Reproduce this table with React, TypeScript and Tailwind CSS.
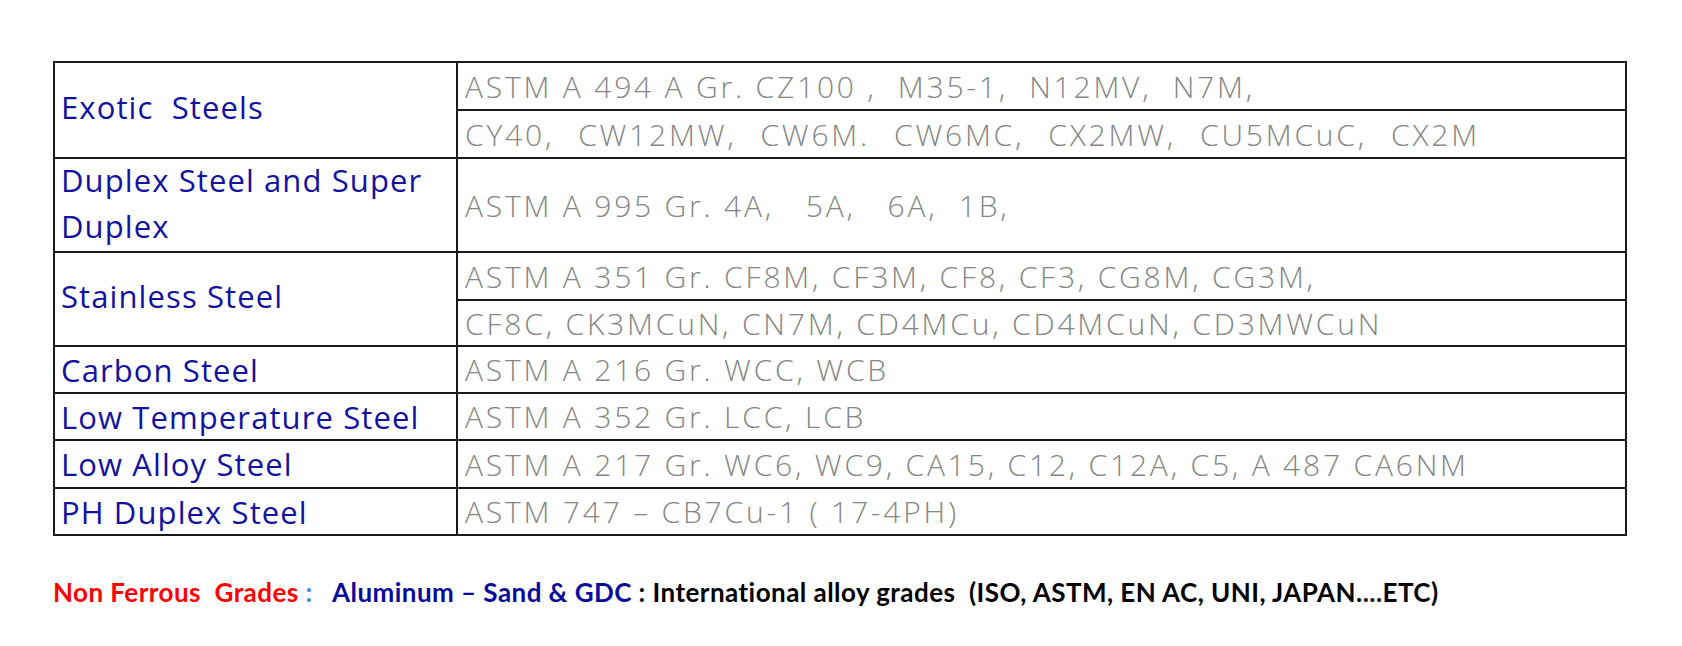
import React from "react";

const labelCls =
  "flex items-center w-[403px] shrink-0 border-r-2 border-[#1a1a1a] pl-[6px] text-[#1212a0] text-[31px] leading-[46px] tracking-[1.1px]";
const gradeCls =
  "flex items-center pl-[7px] text-[#858585] text-[30px] font-light tracking-[2.8px] whitespace-pre";

const labelFont = { fontFamily: '"Open Sans", "Noto Sans", sans-serif' } as const;

function Grade({ text, h, top, extra }: { text: string; h: string; top?: boolean; extra?: string }) {
  return (
    <div
      className={`${gradeCls} ${h} ${top ? "border-t-2 border-[#1a1a1a]" : ""} ${extra ?? ""}`}
      style={labelFont}
    >
      {text}
    </div>
  );
}

export default function App() {
  return (
    <div className="w-[1682px] h-[646px] bg-white overflow-hidden">
      <div className="pt-[61px] pl-[53px]">
        <div className="w-[1574px] border-2 border-[#1a1a1a] flex flex-col">
          {/* Exotic */}
          <div className="flex h-[94px]">
            <div className={labelCls} style={labelFont}>
              <span className="whitespace-pre -mt-[6px]">Exotic  Steels</span>
            </div>
            <div className="flex-1 flex flex-col">
              <Grade h="h-[46px]" text="ASTM A 494 A Gr. CZ100 ,  M35-1,  N12MV,  N7M," />
              <Grade
                top
                h="h-[48px]"
                extra="[word-spacing:1.4px]"
                text="CY40,  CW12MW,  CW6M.  CW6MC,  CX2MW,  CU5MCuC,  CX2M"
              />
            </div>
          </div>
          {/* Duplex */}
          <div className="flex h-[94px] border-t-2 border-[#1a1a1a]">
            <div className={labelCls} style={labelFont}>
              <span className="-mt-[4px]">
                Duplex Steel and Super
                <br />
                Duplex
              </span>
            </div>
            <div className="flex-1 flex flex-col">
              <Grade h="h-full" text="ASTM A 995 Gr. 4A,   5A,   6A,  1B," />
            </div>
          </div>
          {/* Stainless */}
          <div className="flex h-[94px] border-t-2 border-[#1a1a1a]">
            <div className={labelCls} style={labelFont}>
              <span className="-mt-[6px]">Stainless Steel</span>
            </div>
            <div className="flex-1 flex flex-col">
              <Grade h="h-[46px]" text="ASTM A 351 Gr. CF8M, CF3M, CF8, CF3, CG8M, CG3M," />
              <Grade top h="h-[46px]" text="CF8C, CK3MCuN, CN7M, CD4MCu, CD4MCuN, CD3MWCuN" />
            </div>
          </div>
          {/* Carbon */}
          <div className="flex h-[47px] border-t-2 border-[#1a1a1a]">
            <div className={labelCls} style={labelFont}>
              Carbon Steel
            </div>
            <div className="flex-1 flex flex-col">
              <Grade h="h-full" text="ASTM A 216 Gr. WCC, WCB" />
            </div>
          </div>
          {/* Low Temp */}
          <div className="flex h-[47px] border-t-2 border-[#1a1a1a]">
            <div className={labelCls} style={labelFont}>
              Low Temperature Steel
            </div>
            <div className="flex-1 flex flex-col">
              <Grade h="h-full" text="ASTM A 352 Gr. LCC, LCB" />
            </div>
          </div>
          {/* Low Alloy */}
          <div className="flex h-[48px] border-t-2 border-[#1a1a1a]">
            <div className={labelCls} style={labelFont}>
              Low Alloy Steel
            </div>
            <div className="flex-1 flex flex-col">
              <Grade h="h-full" text="ASTM A 217 Gr. WC6, WC9, CA15, C12, C12A, C5, A 487 CA6NM" />
            </div>
          </div>
          {/* PH Duplex */}
          <div className="flex h-[47px] border-t-2 border-[#1a1a1a]">
            <div className={labelCls} style={labelFont}>
              PH Duplex Steel
            </div>
            <div className="flex-1 flex flex-col">
              <Grade h="h-full" text="ASTM 747 – CB7Cu-1 ( 17-4PH)" />
            </div>
          </div>
        </div>
        <div
          className="mt-[40px] text-[26px] font-bold whitespace-pre leading-[32px] tracking-[0.45px]"
          style={{ fontFamily: 'Lato, "Open Sans", sans-serif' }}
        >
          <span className="text-[#ff0000]">Non Ferrous  Grades </span>
          <span className="text-[#3c8fd8]">:   </span>
          <span className="text-[#0a0a9a]">Aluminum – Sand &amp; GDC </span>
          <span className="text-black">: International alloy grades  (ISO, ASTM, EN AC, UNI, JAPAN....ETC)</span>
        </div>
      </div>
    </div>
  );
}
